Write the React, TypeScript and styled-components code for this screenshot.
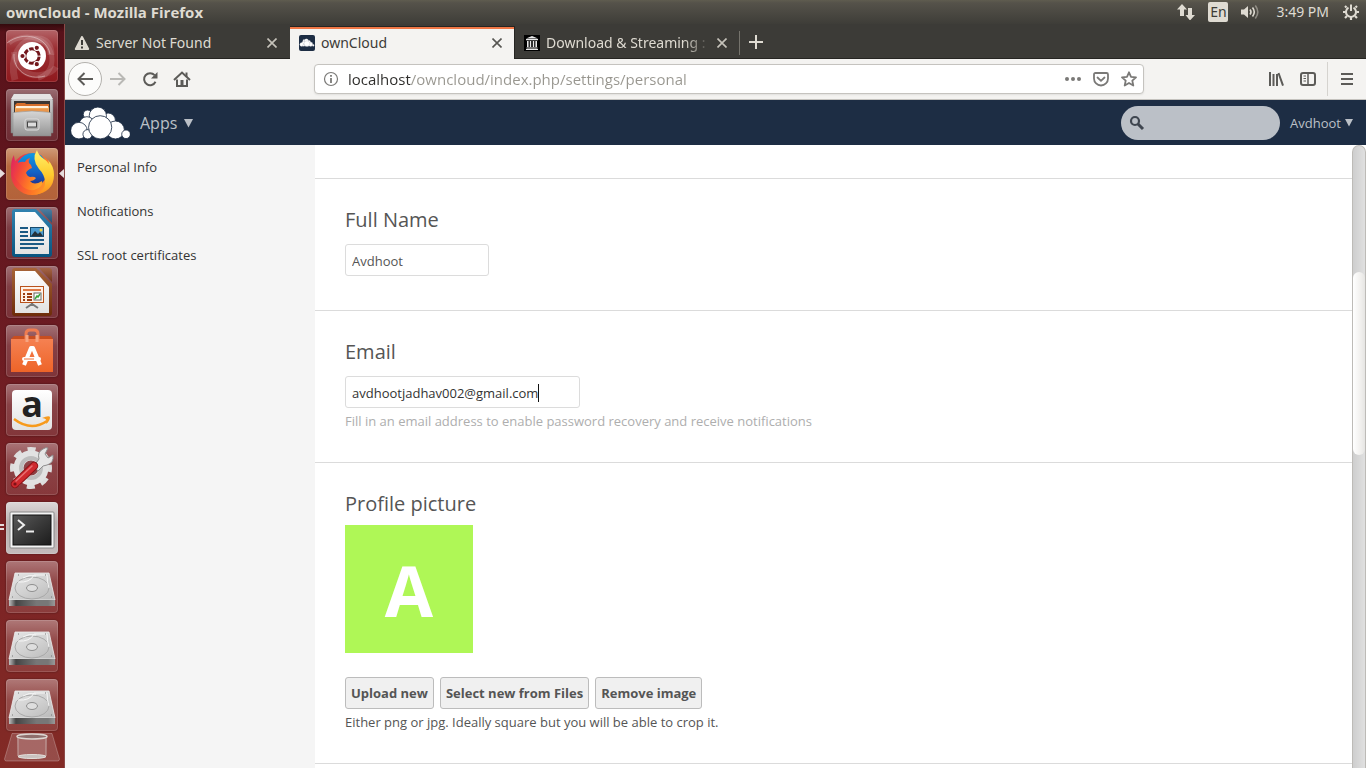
import React from "react";
import styled, { createGlobalStyle, css } from "styled-components";

const uiFont = `"Noto Sans", "Open Sans", sans-serif`;
const webFont = `"Open Sans", "Noto Sans", sans-serif`;

const GlobalStyle = createGlobalStyle`
  *, *::before, *::after { box-sizing: border-box; }
  body { margin: 0; background: #fff; }
  button, input { font: inherit; color: inherit; margin: 0; padding: 0; border: 0; background: none; outline: 0; }
  button { cursor: default; }
  h2, p, ul { margin: 0; padding: 0; }
  svg { display: block; flex: none; }
`;

const Desktop = styled.div`
  display: flex;
  flex-direction: column;
  height: 100vh;
  overflow: hidden;
  font-family: ${uiFont};
`;

/* ---------- system panel ---------- */

const Panel = styled.header`
  flex: none;
  display: flex;
  align-items: center;
  justify-content: space-between;
  height: 24px;
  padding: 0 7px 0 6px;
  background: linear-gradient(#5f5c4f 0, #55524a 3px, #3e3d38 100%);
  color: #dfdbd2;
  font-size: 14px;
  line-height: 24px;
  white-space: nowrap;
`;

const WindowTitle = styled.span`
  font-family: ${webFont};
  font-size: 15px;
  font-weight: 700;
`;

const Indicators = styled.div`
  display: flex;
  align-items: center;
`;

const Indicator = styled.button<{ $gap: number }>`
  margin-left: ${(p) => p.$gap}px;
`;

const Language = styled(Indicator)`
  width: 20px;
  height: 20px;
  border-radius: 2px;
  background: #dfdbd2;
  color: #3c3b37;
  line-height: 20px;
  text-align: center;
`;

/* ---------- launcher ---------- */

const Workspace = styled.div`
  flex: 1;
  display: flex;
  min-height: 0;
`;

const Launcher = styled.nav`
  flex: none;
  width: 65px;
  display: flex;
  flex-direction: column;
  gap: 7px;
  padding: 6px 7px 0 6px;
  border-right: 1px solid #8c4a48;
  background: linear-gradient(#330a0d 0, #58121a 8px, #651820 30%, #7a2225 65%, #822a25 100%);
  overflow: hidden;
`;

type Tone = "red" | "clear" | "orange" | "light";
const tones: Record<Tone, string> = {
  red: "linear-gradient(#b46468, #9c3034 35%, #8f191d)",
  clear: "linear-gradient(rgba(255,255,255,.38), rgba(255,255,255,.16) 40%, rgba(255,255,255,.1))",
  orange: "linear-gradient(#cf9a78, #b8693d 35%, #b3623a)",
  light: "linear-gradient(#ddd8d8, #b9b0b0 40%, #c4bcbc)",
};

const Tile = styled.button<{ $tone: Tone }>`
  position: relative;
  flex: none;
  width: 52px;
  height: 52px;
  border-radius: 4px;
  background: ${(p) => tones[p.$tone]};
  box-shadow: inset 0 0 0 1px rgba(255, 255, 255, 0.14), 0 0 2px rgba(0, 0, 0, 0.45);
`;

const Pip = styled.svg<{ $side: "left" | "right" }>`
  position: absolute;
  top: 21px;
  ${(p) => (p.$side === "left" ? css`left: -6px;` : css`right: -6px;`)}
`;

const TrashTile = styled.button`
  flex: none;
  width: 56px;
  margin: -5px 0 0 -2px;
`;

/* ---------- browser chrome ---------- */

const Browser = styled.div`
  flex: 1;
  min-width: 0;
  display: flex;
  flex-direction: column;
`;

const TabBar = styled.div`
  flex: none;
  display: flex;
  align-items: stretch;
  height: 35px;
  background: #3c3b37;
  box-shadow: inset 0 -1px #262522;
`;

const Tab = styled.div<{ $active?: boolean }>`
  flex: 0 1 225px;
  min-width: 0;
  display: flex;
  align-items: center;
  padding: 2px 8px 0 9px;
  color: #dfdbd2;
  ${(p) =>
    p.$active &&
    css`
      margin-top: 2px;
      padding: 0 7px 0 9px;
      background: #f4f3f1;
      color: #3c3b37;
      border: solid #262522;
      border-width: 1px 1px 0 0;
      box-shadow: inset 0 2px #f07746;
    `}
`;

const TabTitle = styled.button<{ $fade?: boolean }>`
  flex: 1;
  min-width: 0;
  display: flex;
  align-items: center;
  gap: 6px;
  overflow: hidden;
  font-size: 14px;
  line-height: 20px;
  white-space: nowrap;
  ${(p) => p.$fade && css`mask-image: linear-gradient(90deg, #000 160px, transparent 186px);`}
`;

const TabClose = styled.button`
  flex: none;
  display: grid;
  place-items: center;
  width: 20px;
  height: 20px;
`;

const NewTab = styled.button`
  display: grid;
  place-items: center;
  width: 32px;
  padding-top: 1px;
  color: #dfdbd2;
`;

const TabRule = styled.span`
  width: 1px;
  margin: 7px 0 4px -1px;
  background: #75736c;
`;

const Toolbar = styled.div`
  flex: none;
  display: flex;
  align-items: center;
  height: 41px;
  padding-left: 3px;
  background: #f4f3f1;
  border-bottom: 1px solid #c4c2be;
  color: #5c5b58;
`;

const ToolButton = styled.button<{ $width?: number; $dim?: boolean }>`
  flex: none;
  display: grid;
  place-items: center;
  width: ${(p) => p.$width ?? 32}px;
  height: 32px;
  color: ${(p) => (p.$dim ? "#b9b8b5" : "inherit")};
`;

const BackButton = styled(ToolButton)`
  height: 34px;
  border: 1px solid #b3b1ad;
  border-radius: 50%;
  background: #fcfcfb;
`;

const Spacer = styled.span`
  flex: 116 1 116px;
`;

const AddressBar = styled.div`
  flex: 830 1 830px;
  min-width: 0;
  display: flex;
  align-items: center;
  height: 30px;
  padding: 0 0 0 8px;
  border: 1px solid #c5c3bf;
  border-radius: 4px;
  background: #fff;
  box-shadow: 0 1px 2px rgba(0, 0, 0, 0.08);
  color: #7a7977;
`;

const AddressInput = styled.input`
  flex: 1;
  min-width: 0;
  height: 28px;
  margin-left: 9px;
  font-family: ${webFont};
  font-size: 15px;
  color: transparent;
  background: linear-gradient(90deg, #2e2d2b 63px, #98968f 63px);
  background-clip: text;
  -webkit-background-clip: text;
`;

const AddressAction = styled.button`
  display: grid;
  place-items: center;
  width: 28px;
  height: 28px;
`;

const ToolRule = styled.span`
  width: 1px;
  height: 34px;
  margin-left: 3px;
  background: #d5d3cf;
`;

/* ---------- ownCloud page ---------- */

const AppHeader = styled.header`
  flex: none;
  display: flex;
  align-items: center;
  height: 45px;
  padding: 0 13px 0 6px;
  background: #1d2d44;
  color: #bbc0c7;
  font-family: ${webFont};
`;

const HeaderMenu = styled.button<{ $large?: boolean }>`
  display: flex;
  align-items: center;
  gap: ${(p) => (p.$large ? 7 : 4)}px;
  margin-left: 10px;
  font-size: ${(p) => (p.$large ? 16 : 13)}px;
`;

const SearchBox = styled.label`
  display: flex;
  align-items: center;
  gap: 6px;
  width: 159px;
  height: 34px;
  margin-left: auto;
  padding: 0 12px 0 8px;
  border-radius: 17px;
  background: #bbc0c7;
  color: #3f4650;
  input {
    min-width: 0;
    flex: 1;
    font-size: 13px;
  }
`;

const Page = styled.div`
  flex: 1;
  display: flex;
  min-height: 0;
  background: #fff;
  font-family: ${webFont};
  font-size: 13px;
  color: #555;
`;

const Sidebar = styled.nav`
  flex: none;
  width: 250px;
  background: #f5f5f5;
  ul { list-style: none; }
`;

const SideLink = styled.a`
  display: block;
  padding: 0 12px;
  line-height: 44px;
  color: #333;
  text-decoration: none;
`;

const Main = styled.main`
  flex: 1;
  min-width: 0;
  overflow: hidden;
`;

const PriorSection = styled.div`
  height: 34px;
  border-bottom: 1px solid #dbdbdb;
`;

const Section = styled.section`
  padding: 29px 30px 32px;
  border-bottom: 1px solid #dbdbdb;
`;

const Heading = styled.h2<{ $tight?: boolean }>`
  margin-bottom: ${(p) => (p.$tight ? 9 : 12)}px;
  font-size: 20px;
  font-weight: 400;
  line-height: 24px;
  color: #555;
`;

const Field = styled.div`
  position: relative;
  margin-bottom: 2px;
`;

const TextInput = styled.input<{ $width: number; $focused?: boolean }>`
  display: block;
  width: ${(p) => p.$width}px;
  height: 32px;
  padding: 2px 6px 0;
  border: 1px solid #dcdcdc;
  border-radius: 3px;
  background: #fff;
  color: ${(p) => (p.$focused ? "#333" : "#555")};
`;

const Caret = styled.span`
  position: absolute;
  top: 8px;
  left: 193px;
  width: 1px;
  height: 18px;
  background: #111;
`;

const Hint = styled.p<{ $muted?: boolean }>`
  margin-top: 4px;
  line-height: 18px;
  color: ${(p) => (p.$muted ? "#aeaeae" : "#555")};
`;

const Avatar = styled.div`
  width: 128px;
  height: 128px;
  margin-bottom: 24px;
  background: #aff756;
  color: #fff;
  font-size: 70px;
  font-weight: 700;
  line-height: 130px;
  text-align: center;
`;

const ButtonRow = styled.div`
  display: flex;
  gap: 6px;
`;

const ActionButton = styled.button`
  height: 32px;
  padding: 0 5px;
  border: 1px solid #bcbcbc;
  border-radius: 3px;
  background: #f0f0f0;
  font-weight: 700;
  color: #555;
`;

const Scrollbar = styled.div`
  flex: none;
  display: flex;
  flex-direction: column;
  width: 14px;
  border: 1px solid #bdbbb7;
  border-width: 1px 1px 0 1px;
  border-radius: 7px 7px 0 0;
  background: linear-gradient(90deg, #cecece, #e0e0e0);
`;

const ScrollGap = styled.span<{ $grow: number }>`
  flex: ${(p) => p.$grow};
`;

const ScrollThumb = styled.span`
  flex: 183;
  border-radius: 6px;
  background: linear-gradient(90deg, #fff, #f2f1ef 60%, #e6e5e3);
`;

/* ---------- icons ---------- */

const Cross = () => (
  <svg width="10" height="10" viewBox="0 0 10 10" stroke="currentColor" strokeWidth="1.6" opacity=".85">
    <path d="M.5.5l9 9M9.5.5l-9 9" />
  </svg>
);

const Triangle = ({ size }: { size: number }) => (
  <svg width={size} height={size + 1} viewBox="0 0 9 10" fill="currentColor">
    <path d="M0 1h9L4.500 9.500z" />
  </svg>
);

const CloudShape = ({ line }: { line: string }) => (
  <g fill="#fff" stroke={line} strokeWidth="2.500">
    <circle cx="50" cy="22" r="13" />
    <circle cx="112" cy="40" r="22" />
    <circle cx="81" cy="26" r="26" />
    <circle cx="48" cy="52" r="23" />
    <circle cx="24" cy="71" r="25" />
    <circle cx="50" cy="82" r="14" />
    <circle cx="134" cy="69" r="27" />
    <circle cx="166" cy="82" r="13" />
    <circle cx="88" cy="61" r="35" />
  </g>
);

const OwnCloudLogo = () => (
  <svg width="59" height="32" viewBox="0 0 178 96" role="img" aria-label="ownCloud">
    <CloudShape line="#1d2d44" />
  </svg>
);

const OwnCloudFavicon = () => (
  <svg width="16" height="16" viewBox="0 0 16 16">
    <rect width="16" height="16" rx="2" fill="#1d2d44" />
    <g transform="translate(.8 3.700) scale(.081)"><CloudShape line="#7d8796" /></g>
  </svg>
);

const WarningIcon = () => (
  <svg width="16" height="16" viewBox="0 0 16 16">
    <path d="M8 2L1.800 14h12.400z" fill="#dfdbd2" stroke="#dfdbd2" strokeWidth="2" strokeLinejoin="round" />
    <path d="M8 5v5M8 11.500v2" stroke="#3c3b37" strokeWidth="2" />
  </svg>
);

const ArchiveFavicon = () => (
  <svg width="16" height="16" viewBox="0 0 16 16">
    <rect width="16" height="16" fill="#000" />
    <path d="M8 1l6 2.500H2zM2 4h12v1.200H2zM3 6h1.600v6H3zM5.800 6h1.400v6H5.800zM8.800 6h1.400v6H8.800zM11.400 6H13v6h-1.600zM2.500 12.500h11v1h-11zM2 14h12v1H2z" fill="#e8e8e8" />
  </svg>
);

const NetworkIcon = () => (
  <svg width="18" height="16" viewBox="0 0 18 16" fill="#dfdbd2">
    <path d="M5 0l5 5.500H7V12H3V5.500H0zM11 4h4v7h3l-5 5.500L8.500 11H11z" />
  </svg>
);

const VolumeIcon = () => (
  <svg width="20" height="16" viewBox="0 0 20 16" fill="none" stroke="#dfdbd2" strokeWidth="1.600">
    <path d="M1 5.500h3L8 2v12l-4-3.500H1z" fill="#dfdbd2" stroke="none" />
    <path d="M10 5.500q2 2.500 0 5M12.500 3.500q3.600 4.500 0 9" />
    <path d="M15.300 1.500q5 6.500 0 13" opacity=".45" />
  </svg>
);

const PowerIcon = () => (
  <svg width="16" height="16" viewBox="0 0 16 16" fill="none" stroke="#dfdbd2">
    <path d="M5.500 3.600a5 5 0 1 0 5 0" strokeWidth="2" />
    <path d="M8 .5V7" strokeWidth="2" />
    <path d="M3.500 3.500L2 2M12.500 3.500L14 2M2.800 8H0M13.200 8H16M4 12l-2 2M12 12l2 2M8 13v3" strokeWidth="2.200" />
  </svg>
);

const BackIcon = () => (
  <svg width="16" height="14" viewBox="0 0 16 14" fill="none" stroke="currentColor" strokeWidth="2">
    <path d="M7.500 1L1.500 7l6 6M2 7h14" />
  </svg>
);

const ForwardIcon = () => (
  <svg width="16" height="14" viewBox="0 0 16 14" fill="none" stroke="currentColor" strokeWidth="2">
    <path d="M8.500 1l6 6-6 6M14 7H0" />
  </svg>
);

const ReloadIcon = () => (
  <svg width="16" height="16" viewBox="0 0 16 16" fill="none" stroke="currentColor" strokeWidth="2">
    <path d="M13.500 10.800A6 6 0 1 1 12.600 4.200" />
    <path d="M15.500 1v6.500H9z" fill="currentColor" stroke="none" />
  </svg>
);

const HomeIcon = () => (
  <svg width="18" height="17" viewBox="0 0 18 17" fill="none" stroke="currentColor" strokeWidth="2">
    <path d="M1 9l8-7.500L17 9" />
    <path d="M4 8.500V15h10V8.500" />
    <path d="M12.500 1.500h2V6h-2z" fill="currentColor" stroke="none" />
    <path d="M7.500 9h3v6h-3z" fill="currentColor" stroke="none" />
  </svg>
);

const InfoIcon = () => (
  <svg width="16" height="16" viewBox="0 0 16 16" fill="none" stroke="currentColor">
    <circle cx="8" cy="8" r="6.500" strokeWidth="1.200" />
    <path d="M8 4v1.800M8 7v5" strokeWidth="1.800" />
  </svg>
);

const DotsIcon = () => (
  <svg width="16" height="4" viewBox="0 0 16 4" fill="currentColor">
    <circle cx="2" cy="2" r="2" /><circle cx="8" cy="2" r="2" /><circle cx="14" cy="2" r="2" />
  </svg>
);

const PocketIcon = () => (
  <svg width="16" height="15" viewBox="0 0 16 15" fill="none" stroke="currentColor" strokeWidth="1.800">
    <path d="M1 2.500q0-1.500 1.500-1.500h11Q15 1 15 2.500V6.500a7 7 0 0 1-14 0z" />
    <path d="M4.500 5.500L8 8.800l3.500-3.300" strokeLinecap="round" />
  </svg>
);

const StarIcon = () => (
  <svg width="16" height="16" viewBox="0 0 16 16" fill="none" stroke="currentColor" strokeWidth="1.800" strokeLinejoin="round">
    <path d="M8 1.300l2 4.500 5 .5-3.700 3.300 1 4.900L8 12l-4.300 2.500 1-4.900L1 6.300l5-.5z" />
  </svg>
);

const LibraryIcon = () => (
  <svg width="16" height="14" viewBox="0 0 16 14" stroke="currentColor" strokeWidth="2">
    <path d="M2 0v14M5.500 2v12M9 2v12M10.500 1l4.500 12.600" />
  </svg>
);

const SidebarIcon = () => (
  <svg width="16" height="14" viewBox="0 0 16 14" fill="none" stroke="currentColor">
    <rect x="1" y="1" width="14" height="12" rx="2" strokeWidth="2" />
    <path d="M8 1v12" strokeWidth="1.500" />
    <path d="M3.500 4H6M3.500 6.500H6M3.500 9H6" />
  </svg>
);

const MenuIcon = () => (
  <svg width="12" height="12" viewBox="0 0 12 12" stroke="currentColor" strokeWidth="2">
    <path d="M0 1h12M0 6h12M0 11h12" />
  </svg>
);

const SearchIcon = () => (
  <svg width="16" height="16" viewBox="0 0 16 16" fill="none" stroke="currentColor">
    <circle cx="6" cy="6" r="4" strokeWidth="2.200" />
    <path d="M9 9l5 5" strokeWidth="3" />
  </svg>
);

const Art = ({ children }: { children: React.ReactNode }) => (
  <svg width="52" height="52" viewBox="0 0 52 52" overflow="visible">{children}</svg>
);

const Gradients = () => (
  <svg width="0" height="0" style={{ position: "absolute" }} aria-hidden="true">
    <defs>
      <linearGradient id="steel" x2="0" y2="1"><stop stopColor="#d6d6d6" /><stop offset="1" stopColor="#949494" /></linearGradient>
      <linearGradient id="paper" x2="0" y2="1"><stop stopColor="#fff" /><stop offset="1" stopColor="#e2e2e2" /></linearGradient>
      <linearGradient id="blue" x2="0" y2="1"><stop stopColor="#3283b0" /><stop offset="1" stopColor="#08547f" /></linearGradient>
      <linearGradient id="brown" x2="0" y2="1"><stop stopColor="#a86438" /><stop offset="1" stopColor="#6d2c0a" /></linearGradient>
      <linearGradient id="bag" x2="0" y2="1"><stop stopColor="#f58152" /><stop offset="1" stopColor="#ee6428" /></linearGradient>
      <linearGradient id="foxBody" x1="0" y1=".2" x2="1" y2=".6"><stop stopColor="#e0265f" /><stop offset=".3" stopColor="#f2453c" /><stop offset=".7" stopColor="#ff7a25" /><stop offset="1" stopColor="#ffa02c" /></linearGradient>
      <linearGradient id="foxTail" x2="0" y2="1"><stop stopColor="#fff36b" /><stop offset=".55" stopColor="#ffcb2e" /><stop offset="1" stopColor="#ff8a1f" /></linearGradient>
      <linearGradient id="globe" x2="0" y2="1"><stop stopColor="#0d9be4" /><stop offset=".6" stopColor="#1560c4" /><stop offset="1" stopColor="#20308c" /></linearGradient>
      <linearGradient id="screen" x1="0" y1="0" x2="1" y2="1"><stop stopColor="#5a5a5a" /><stop offset=".5" stopColor="#3a3a3a" /><stop offset="1" stopColor="#1c1c1c" /></linearGradient>
      <linearGradient id="diskTop" x1="0" y1="0" x2="1" y2="1"><stop stopColor="#e6e6e6" /><stop offset=".5" stopColor="#d2d2d2" /><stop offset="1" stopColor="#b8b8b8" /></linearGradient>
      <linearGradient id="diskEdge"><stop stopColor="#c0c0c0" /><stop offset=".15" stopColor="#444" /><stop offset=".6" stopColor="#777" /><stop offset=".85" stopColor="#777" /><stop offset="1" stopColor="#999" /></linearGradient>
    </defs>
  </svg>
);

const DashArt = () => (
  <Art>
    <g fill="none" stroke="#fff">
      <path d="M9 50C3 28 14 9 32 9c8 0 13 6 13 16" strokeWidth="7" opacity=".13" />
      <path d="M3 13c15-12 43-6 43 17 0 9-6 16-14 18" strokeWidth="5" opacity=".14" />
      <path d="M8 22c2 18 15 25 27 23 6-1 12-3 15-8" strokeWidth="6" opacity=".13" />
      <path d="M1 13C18 0 41 7 44 24M8 24c-1 15 13 27 31 22" strokeWidth="1" opacity=".4" />
    </g>
    <circle cx="26" cy="26" r="14" fill="#fff" />
    <circle cx="26" cy="26" r="7.200" fill="none" stroke="#72171c" strokeWidth="3" strokeDasharray="13.580 1.500" strokeDashoffset="-.75" />
    <g fill="#72171c" stroke="#fff" strokeWidth="1.200">
      <circle cx="16.500" cy="26" r="2.700" /><circle cx="30.800" cy="17.800" r="2.700" /><circle cx="30.800" cy="34.200" r="2.700" />
    </g>
  </Art>
);

const FilesArt = () => (
  <Art>
    <path d="M8 5h36l3 6v33H5V11z" fill="url(#steel)" stroke="#777" strokeWidth=".5" />
    <path d="M8 5h36l3 5H5z" fill="#e4e4e4" />
    <path d="M8 12h36v12H8z" fill="#3c3633" />
    <path d="M9 16l2-2h8l1 1h23v9H9z" fill="#d66f2c" />
    <path d="M9 18h34v6H9z" fill="#f2a95c" /><path d="M10 17h32v2H10z" fill="#fff0dc" />
    <path d="M10 20h32v3H10z" fill="#e9964c" />
    <path d="M7 23.500q19-3 38 0V47H7z" fill="url(#steel)" stroke="#888" strokeWidth=".5" />
    <rect x="19" y="30" width="14" height="11" rx="2" fill="#aaa" stroke="#ddd" />
    <rect x="21.500" y="33" width="9" height="5" fill="#ddd" stroke="#444" />
  </Art>
);

const FirefoxArt = () => (
  <Art>
    <circle cx="26" cy="26" r="21" fill="url(#foxBody)" />
    <path d="M12 14Q18 5 27 5q10 0 13 10 3 14-4 20-7 5-14 1-9-5-10-12z" fill="url(#globe)" />
    <path d="M8 7q0 5 3 8 5-2 8-1 1-3 5-4-2 3-1 5 3 2 3 5-5 2-6 5 1 3 4 4 4-1 6 1-2 3-6 3 4 5 12 0 2 6-8 9-8 1-14-6-8-8-9-16 0-8 3-13z" fill="url(#foxBody)" />
    <path d="M31 2q1 5 7 9 3 2 5 5 0-2-1-4 6 6 6 15 0 17-20 20 12-4 11-14-1-7-6-12-8-10-2-19z" fill="url(#foxTail)" />
  </Art>
);

const Document = ({ fill }: { fill: string }) => (
  <>
    <path d="M9 2h21l16 16v29q0 3-3 3H9q-3 0-3-3V5q0-3 3-3z" fill={fill} />
    <path d="M33 2h10q3 0 3 3v11z" fill={fill} opacity=".75" />
    <path d="M9 5h20l14 16v26H9z" fill="url(#paper)" />
  </>
);

const WriterArt = () => (
  <Art>
    <Document fill="url(#blue)" />
    <path d="M14 21h8M14 25h8M14 29h8M14 33h24M14 37h24M14 41h18" stroke="#1b5a84" strokeWidth="2" />
    <rect x="24.500" y="20.500" width="13" height="9" fill="#4d9cd0" stroke="#174b6d" />
    <path d="M25 29l4-5 3 3 2-2 3 4z" fill="#25313a" /><circle cx="35" cy="23" r="1.500" fill="#f4d03f" />
  </Art>
);

const ImpressArt = () => (
  <Art>
    <Document fill="url(#brown)" />
    <path d="M20 42l6-4 6 4M26 36v4" fill="none" stroke="#777" strokeWidth="2" />
    <rect x="14.500" y="20.500" width="23" height="16" fill="#fff2e8" stroke="#b9521c" />
    <path d="M17 24h18" stroke="#df7a45" strokeWidth="2" />
    <path d="M17 28h2M17 31h2M17 34h2M21 28h5M21 31h5M21 34h5" stroke="#9c3e12" strokeWidth="2" />
    <rect x="28" y="27" width="7" height="7" fill="#fff" stroke="#666" /><path d="M29 33l2-3 1 1 2-3" fill="none" stroke="#39a43a" strokeWidth="1.500" />
  </Art>
);

const SoftwareArt = () => (
  <Art>
    <path d="M5 14l3-3h37l2 3v8H5z" fill="#c84e20" />
    <path d="M20 18V9q0-4 4-4h4q4 0 4 4v9" fill="none" stroke="#ef7c50" strokeWidth="3" />
    <path d="M5 14h42v33H5z" fill="url(#bag)" />
    <path d="M21 17V10M31 17V10" stroke="#f6a582" strokeWidth="3" />
    <path d="M18 40l7-17h2l7 17" fill="none" stroke="#fff" strokeWidth="4" strokeLinejoin="round" />
    <rect x="16" y="32" width="19" height="4" rx="2" fill="#fff" /><path d="M18 34h10" stroke="#f07038" />
  </Art>
);

const AmazonArt = () => (
  <Art>
    <rect x="6" y="6" width="40" height="40" rx="4" fill="url(#paper)" />
    <text x="26" y="33" textAnchor="middle" fontFamily="Open Sans, sans-serif" fontWeight="700" fontSize="36" fill="#222">a</text>
    <path d="M8 35q17 13 33 2" fill="none" stroke="#f79a1c" strokeWidth="2.500" />
    <path d="M36 34q7-3 8-1 0 4-4 7 2-6-4-6z" fill="#f79a1c" />
  </Art>
);

const SettingsArt = () => (
  <Art>
    <circle cx="25" cy="25" r="18.500" fill="none" stroke="#dedede" strokeWidth="5" strokeDasharray="8 6.530" strokeDashoffset="4" />
    <circle cx="25" cy="25" r="12.500" fill="none" stroke="#e2e2e2" strokeWidth="10" />
    <circle cx="25" cy="25" r="10" fill="none" stroke="#bdbdbd" strokeWidth="4" />
    <path d="M28 23l5-7q-2-7 4-10 3-2 5-1l-3 6 3 4 5-3q1 8-6 10l-4 1-5 5z" fill="#e6e6e6" stroke="#8e8e8e" />
    <path d="M9 41l19-18" stroke="#8d1318" strokeWidth="8.500" strokeLinecap="round" />
    <path d="M9 41l19-18" stroke="#cf2a2f" strokeWidth="6.500" strokeLinecap="round" />
    <path d="M10 38l16-15" stroke="#e87073" strokeWidth="1.500" strokeLinecap="round" />
    <circle cx="9" cy="41" r="1.600" fill="#7d1217" />
  </Art>
);

const TerminalArt = () => (
  <Art>
    <rect x="4" y="10" width="44" height="36" rx="1" fill="#f4f4f4" stroke="#888" />
    <rect x="7" y="13" width="38" height="30" fill="url(#screen)" stroke="#111" />
    <path d="M12 18l6 5-6 5M20 29.500h8" fill="none" stroke="#eee" strokeWidth="2" />
  </Art>
);

const DiskArt = () => (
  <Art>
    <path d="M9 12h34l6 27H3z" fill="url(#diskTop)" stroke="#efefef" strokeWidth=".8" />
    <path d="M3 39h46v6H3z" fill="url(#diskEdge)" />
    <ellipse cx="26" cy="27" rx="17" ry="11" fill="none" stroke="#a9a9a9" />
    <path d="M12 21q12 1 16-7h13q0 7 2 13M17 17q6-4 13-2" fill="none" stroke="#f6f6f6" />
    <ellipse cx="26" cy="27" rx="5.500" ry="3.500" fill="#dedede" stroke="#8f8f8f" />
    <path d="M12 14h1M39 14h1M6 36h1M45 36h1" stroke="#777" />
  </Art>
);

const TrashArt = () => (
  <svg width="56" height="29" viewBox="0 0 56 29">
    <path d="M8 .5h40L55.500 26q0 2-2 2h-51q-2 0-2-2z" fill="#fff" fillOpacity=".16" stroke="#fff" strokeOpacity=".25" />
    <path d="M13 3h30l-1 21q-14 3-28 0z" fill="#fff" fillOpacity=".16" />
    <ellipse cx="28" cy="3.500" rx="15" ry="2.500" fill="#8f6f6d" stroke="#dcd6d2" strokeWidth="1.500" />
    <ellipse cx="28" cy="23.500" rx="14" ry="2" fill="#c9c1be" stroke="#e4dfdb" />
    <path d="M14 5v18M42 5v18" stroke="#d0c0bd" opacity=".7" />
  </svg>
);

/* ---------- data ---------- */

const launcherItems: { name: string; tone: Tone; Icon: React.FC; mark?: "active" | "open" }[] = [
  { name: "Dash", tone: "red", Icon: DashArt },
  { name: "Files", tone: "clear", Icon: FilesArt },
  { name: "Firefox", tone: "orange", Icon: FirefoxArt, mark: "active" },
  { name: "LibreOffice Writer", tone: "clear", Icon: WriterArt },
  { name: "LibreOffice Impress", tone: "clear", Icon: ImpressArt },
  { name: "Ubuntu Software", tone: "clear", Icon: SoftwareArt },
  { name: "Amazon", tone: "clear", Icon: AmazonArt },
  { name: "System Settings", tone: "clear", Icon: SettingsArt },
  { name: "Terminal", tone: "light", Icon: TerminalArt, mark: "open" },
  { name: "Disk 1", tone: "clear", Icon: DiskArt },
  { name: "Disk 2", tone: "clear", Icon: DiskArt },
  { name: "Disk 3", tone: "clear", Icon: DiskArt },
];

const sideLinks = ["Personal Info", "Notifications", "SSL root certificates"];
const pictureActions = ["Upload new", "Select new from Files", "Remove image"];

export default function App() {
  return (
    <Desktop>
      <GlobalStyle />
      <Gradients />
      <Panel>
        <WindowTitle>ownCloud - Mozilla Firefox</WindowTitle>
        <Indicators>
          <Indicator $gap={0} aria-label="Network"><NetworkIcon /></Indicator>
          <Language $gap={13}>En</Language>
          <Indicator $gap={12} aria-label="Volume"><VolumeIcon /></Indicator>
          <Indicator $gap={16}>3:49 PM</Indicator>
          <Indicator $gap={14} aria-label="Session"><PowerIcon /></Indicator>
        </Indicators>
      </Panel>

      <Workspace>
        <Launcher aria-label="Launcher">
          {launcherItems.map(({ name, tone, Icon, mark }) => (
            <Tile key={name} $tone={tone} aria-label={name}>
              <Icon />
              {mark === "active" && (
                <>
                  <Pip $side="left" width="5" height="9" viewBox="0 0 5 9"><path d="M0 0l5 4.500L0 9z" fill="#e6dcdc" /></Pip>
                  <Pip $side="right" width="5" height="9" viewBox="0 0 5 9"><path d="M5 0L0 4.500 5 9z" fill="#e6dcdc" /></Pip>
                </>
              )}
              {mark === "open" && (
                <Pip $side="left" width="5" height="9" viewBox="0 0 5 9"><path d="M0 1h4v2H0zM0 5h4v2H0z" fill="#e6dcdc" /></Pip>
              )}
            </Tile>
          ))}
          <TrashTile aria-label="Trash"><TrashArt /></TrashTile>
        </Launcher>

        <Browser>
          <TabBar>
            <Tab>
              <TabTitle><WarningIcon />Server Not Found</TabTitle>
              <TabClose aria-label="Close tab"><Cross /></TabClose>
            </Tab>
            <Tab $active>
              <TabTitle><OwnCloudFavicon />ownCloud</TabTitle>
              <TabClose aria-label="Close tab"><Cross /></TabClose>
            </Tab>
            <Tab>
              <TabTitle $fade><ArchiveFavicon />Download &amp; Streaming :</TabTitle>
              <TabClose aria-label="Close tab"><Cross /></TabClose>
            </Tab>
            <TabRule />
            <NewTab aria-label="New tab">
              <svg width="14" height="14" viewBox="0 0 14 14" stroke="currentColor" strokeWidth="2"><path d="M7 0v14M0 7h14" /></svg>
            </NewTab>
          </TabBar>

          <Toolbar>
            <BackButton $width={34} aria-label="Back"><BackIcon /></BackButton>
            <ToolButton $dim aria-label="Forward"><ForwardIcon /></ToolButton>
            <ToolButton aria-label="Reload"><ReloadIcon /></ToolButton>
            <ToolButton aria-label="Home"><HomeIcon /></ToolButton>
            <Spacer />
            <AddressBar>
              <InfoIcon />
              <AddressInput aria-label="Address" defaultValue="localhost/owncloud/index.php/settings/personal" spellCheck={false} />
              <AddressAction aria-label="Page actions"><DotsIcon /></AddressAction>
              <AddressAction aria-label="Save to Pocket"><PocketIcon /></AddressAction>
              <AddressAction aria-label="Bookmark"><StarIcon /></AddressAction>
            </AddressBar>
            <Spacer />
            <ToolButton aria-label="Library"><LibraryIcon /></ToolButton>
            <ToolButton aria-label="Sidebars"><SidebarIcon /></ToolButton>
            <ToolRule />
            <ToolButton $width={38} aria-label="Menu"><MenuIcon /></ToolButton>
          </Toolbar>

          <AppHeader>
            <OwnCloudLogo />
            <HeaderMenu $large>Apps <Triangle size={9} /></HeaderMenu>
            <SearchBox>
              <SearchIcon />
              <input type="search" aria-label="Search" />
            </SearchBox>
            <HeaderMenu>Avdhoot <Triangle size={8} /></HeaderMenu>
          </AppHeader>

          <Page>
            <Sidebar aria-label="Settings">
              <ul>
                {sideLinks.map((label) => (
                  <li key={label}><SideLink href="#">{label}</SideLink></li>
                ))}
              </ul>
            </Sidebar>
            <Main>
              <PriorSection />
              <Section>
                <Heading><label htmlFor="fullname">Full Name</label></Heading>
                <Field>
                  <TextInput id="fullname" $width={144} defaultValue="Avdhoot" />
                </Field>
              </Section>
              <Section>
                <Heading><label htmlFor="email">Email</label></Heading>
                <Field>
                  <TextInput id="email" type="email" $width={235} $focused defaultValue="avdhootjadhav002@gmail.com" />
                  <Caret />
                </Field>
                <Hint $muted>Fill in an email address to enable password recovery and receive notifications</Hint>
              </Section>
              <Section>
                <Heading $tight>Profile picture</Heading>
                <Avatar>A</Avatar>
                <ButtonRow>
                  {pictureActions.map((label) => (
                    <ActionButton key={label}>{label}</ActionButton>
                  ))}
                </ButtonRow>
                <Hint>Either png or jpg. Ideally square but you will be able to crop it.</Hint>
              </Section>
            </Main>
            <Scrollbar aria-hidden="true">
              <ScrollGap $grow={126} />
              <ScrollThumb />
              <ScrollGap $grow={313} />
            </Scrollbar>
          </Page>
        </Browser>
      </Workspace>
    </Desktop>
  );
}
